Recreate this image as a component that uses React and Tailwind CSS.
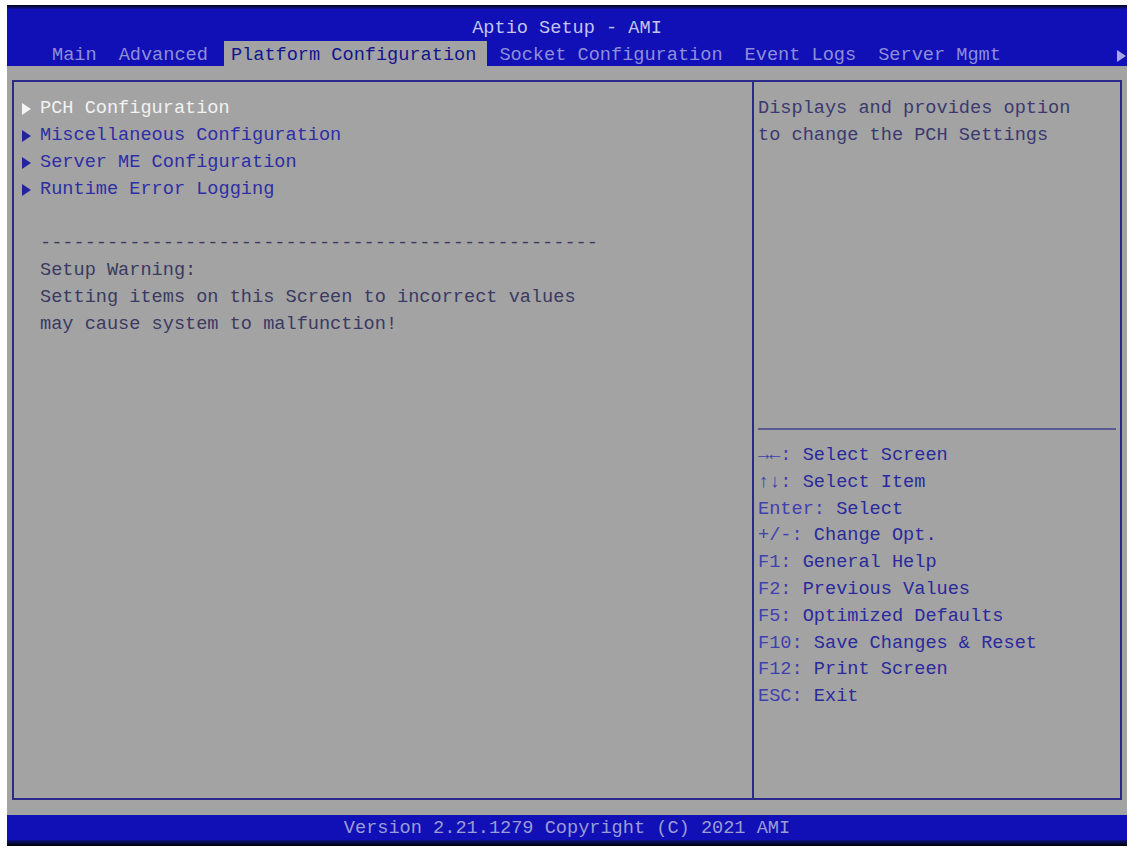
import React from "react";

const mono = { fontFamily: '"Liberation Mono", "DejaVu Sans Mono", monospace' };

const tabs = [
  "Main",
  "Advanced",
  "Platform Configuration",
  "Socket Configuration",
  "Event Logs",
  "Server Mgmt",
];

const items = [
  "PCH Configuration",
  "Miscellaneous Configuration",
  "Server ME Configuration",
  "Runtime Error Logging",
];

const help = [
  ["→←:", "Select Screen"],
  ["↑↓:", "Select Item"],
  ["Enter:", "Select"],
  ["+/-:", "Change Opt."],
  ["F1:", "General Help"],
  ["F2:", "Previous Values"],
  ["F5:", "Optimized Defaults"],
  ["F10:", "Save Changes & Reset"],
  ["F12:", "Print Screen"],
  ["ESC:", "Exit"],
];

const Arrow = ({ color }) => (
  <svg width="9" height="12" viewBox="0 0 9 12">
    <polygon points="0,0 9,6 0,12" fill={color} />
  </svg>
);

export default function App() {
  return (
    <div className="w-full h-[851px] bg-white pl-[7px] pt-[5px]" style={mono}>
      <div className="w-[1120px] h-[841px] flex flex-col text-[18.6px]">
        {/* Header */}
        <div className="h-[4px] bg-linear-to-b from-[#05051a] to-[#10109a]" />
        <div className="h-[57px] bg-[#1010b6] flex flex-col">
          <div className="h-[32px] flex items-end justify-center pb-[1px]">
            <span className="leading-[22px] text-[#c4c4ec]">Aptio Setup - AMI</span>
          </div>
          <div className="h-[25px] flex items-stretch pl-[39px] gap-[10px] relative">
            {tabs.map((t) => (
              <div
                key={t}
                className={`leading-[25px] pt-[2px] whitespace-pre ${
                  t === "Platform Configuration"
                    ? "pl-[7px] pr-[11px] -mr-[4px] bg-[#a3a3a3] text-[#14148e]"
                    : "px-[6px] text-[#8e8ed8]"
                }`}
              >
                {t}
              </div>
            ))}
            <div className="absolute right-[1px] top-[9px]">
              <Arrow color="#a8a8e0" />
            </div>
          </div>
        </div>

        {/* Body */}
        <div className="flex-1 bg-[#a3a3a3] px-[5px] pt-[14px] pb-[15px] flex">
          <div className="flex-1 flex border-2 border-[#2a2a8c]">
            {/* Left column */}
            <div className="w-[740px] border-r-2 border-[#2a2a8c] pl-[6px] pt-[13px] leading-[27px]">
              {items.map((it, i) => (
                <div key={it} className="flex items-center h-[27px]">
                  <span className="w-[20px] pl-[2px] flex items-center">
                    <Arrow color={i === 0 ? "#f4f4f4" : "#2323a0"} />
                  </span>
                  <span className={i === 0 ? "text-[#f2f2f2]" : "text-[#2e2ea6]"}>
                    {it}
                  </span>
                </div>
              ))}
              <div className="h-[27px]" />
              <div className="pl-[20px] text-[#3a3a62] whitespace-pre">
                <div>--------------------------------------------------</div>
                <div>Setup Warning:</div>
                <div>Setting items on this Screen to incorrect values</div>
                <div>may cause system to malfunction!</div>
              </div>
            </div>

            {/* Right column */}
            <div className="flex-1 flex flex-col">
              <div className="h-[346px] pl-[4px] pt-[13px] leading-[27px] text-[#3a3a70]">
                <div>Displays and provides option</div>
                <div>to change the PCH Settings</div>
              </div>
              <div className="mx-[4px] border-t-2 border-[#5a5a92]" />
              <div className="pl-[4px] pt-[13px] leading-[26.8px] whitespace-pre">
                {help.map(([k, v]) => (
                  <div key={k}>
                    <span className="text-[#4040b0]">{k}</span>
                    <span className="text-[#2a2a9c]"> {v}</span>
                  </div>
                ))}
              </div>
            </div>
          </div>
        </div>

        {/* Footer */}
        <div className="h-[25px] bg-[#1010b6] flex items-center justify-center pt-[3px]">
          <span className="leading-[22px] text-[#9c9cd4]">
            Version 2.21.1279 Copyright (C) 2021 AMI
          </span>
        </div>
        <div className="h-[6px] bg-linear-to-b from-[#10108a] to-[#020208]" />
      </div>
    </div>
  );
}
